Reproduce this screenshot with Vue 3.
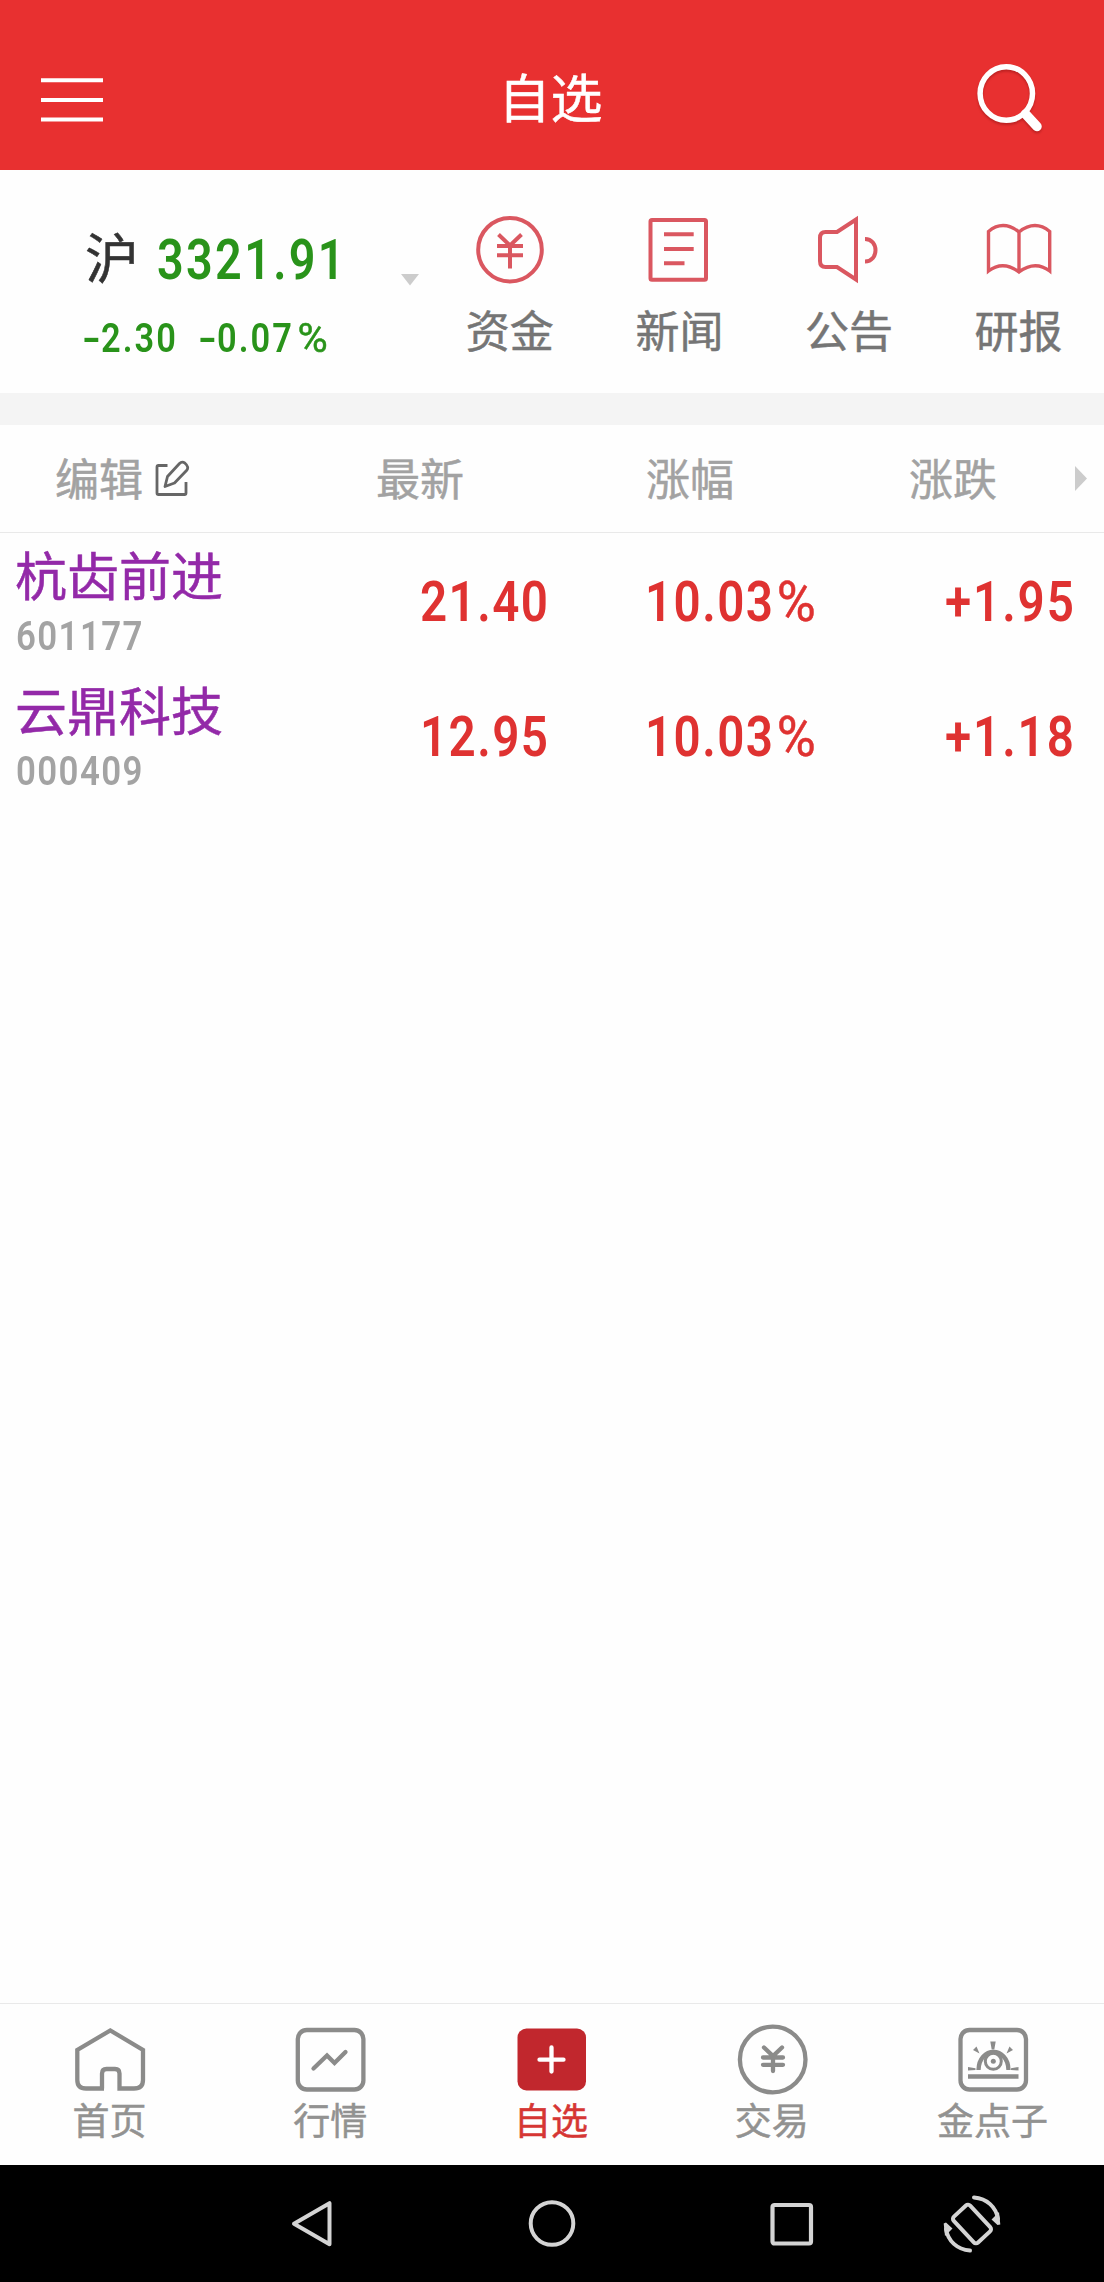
<script setup>
const shortcuts = [
  { id: 'fund', label: '资金' },
  { id: 'news', label: '新闻' },
  { id: 'notice', label: '公告' },
  { id: 'report', label: '研报' },
]
const stocks = [
  { name: '杭齿前进', code: '601177', price: '21.40', percent: '10.03', change: '+1.95' },
  { name: '云鼎科技', code: '000409', price: '12.95', percent: '10.03', change: '+1.18' },
]
const tabs = [
  { id: 'home', label: '首页' },
  { id: 'market', label: '行情' },
  { id: 'watch', label: '自选', active: true },
  { id: 'trade', label: '交易' },
  { id: 'ideas', label: '金点子' },
]
</script>

<template>
  <div class="screen">
    <header class="header">
      <svg class="menu" width="62" height="44" viewBox="0 0 62 44">
        <path d="M0 2.3H62M0 22H62M0 41.5H62" stroke="#fff" stroke-width="4" />
      </svg>
      <h1>自选</h1>
      <svg class="search" width="72" height="72" viewBox="0 0 72 72" fill="none" stroke="#fff">
        <ellipse cx="32.3" cy="31.5" rx="26.2" ry="26.8" stroke-width="5.5" />
        <path d="M51.500 52L63 64.500" stroke-width="9.500" stroke-linecap="round" />
      </svg>
    </header>

    <section class="summary">
      <div class="index">
        <div class="index-main"><span class="cjk">沪</span><span class="num">3321.91</span></div>
        <div class="index-sub">
          <span class="num delta"><i class="minus">-</i>2.30</span>
          <span class="num"><i class="minus">-</i>0.07<i class="pct">%</i></span>
        </div>
      </div>
      <svg class="caret" width="18" height="12" viewBox="0 0 18 12"><path d="M0 0H18L9 11.500Z" fill="#ccc" /></svg>
      <nav class="shortcuts">
        <div v-for="s in shortcuts" :key="s.id" class="shortcut">
          <svg width="72" height="72" viewBox="0 0 72 72" fill="none" stroke="#da5760" stroke-width="4">
            <template v-if="s.id === 'fund'">
              <circle cx="36" cy="35.700" r="31.800" />
              <path d="M24.500 20.500L36 31.500L47.500 20.500M23 32H49M23 41.300H49M36 31V54.500" />
            </template>
            <template v-else-if="s.id === 'news'">
              <rect x="7.500" y="6" width="55.500" height="59.800" rx="1.500" />
              <path d="M21 20.300H50.700M21 35H50.700M21 49.300H41.500" />
            </template>
            <template v-else-if="s.id === 'notice'">
              <path d="M12.500 18H24L43 5.500V65.500L24 53H12.500Q7 53 7 47V24Q7 18 12.500 18Z" />
              <path d="M52 25C66 25 66 47.500 52 47.500" />
            </template>
            <template v-else>
              <path d="M36 18Q20 5.500 5.500 17.500V57Q20 46 36 58Q52 46 66.700 57V17.500Q52 5.500 36 18V58" stroke-width="3.400" />
            </template>
          </svg>
          <span>{{ s.label }}</span>
        </div>
      </nav>
    </section>

    <div class="gap"></div>

    <section class="table">
      <div class="thead">
        <span class="edit">编辑
          <svg width="36" height="38" viewBox="0 0 36 38" fill="none" stroke="#666" stroke-width="2.800" stroke-linejoin="round">
            <path d="M12.500 5.500H3.500Q2 5.500 2 7V33Q2 34.500 3.500 34.500H29.500Q31 34.500 31 33V22" />
            <path d="M10 26.500L12.500 16.500L24.500 3.500Q27 1 30 3.200Q34.500 7 31.500 10.500L19.500 23Z" />
          </svg>
        </span>
        <span class="c1">最新</span>
        <span class="c2">涨幅</span>
        <span class="c3">涨跌</span>
        <svg class="more" width="12" height="25" viewBox="0 0 12 25"><path d="M0 0L12 12.500L0 25Z" fill="#ccc" /></svg>
      </div>
      <div v-for="r in stocks" :key="r.code" class="row">
        <div class="stock">
          <div class="name">{{ r.name }}</div>
          <div class="code"><span class="num">{{ r.code }}</span></div>
        </div>
        <div class="v1"><span class="num">{{ r.price }}</span></div>
        <div class="v2"><span class="num">{{ r.percent }}<i class="pct">%</i></span></div>
        <div class="v3"><span class="num">{{ r.change }}</span></div>
      </div>
    </section>

    <nav class="tabs">
      <div v-for="t in tabs" :key="t.id" class="tab" :class="{ active: t.active }">
        <svg width="72" height="72" viewBox="0 0 72 72" fill="none" stroke="#8b8b8a" stroke-width="4.300">
          <path v-if="t.id === 'home'" d="M28 64.500V49.500Q28 45 32.500 45H41Q45.500 45 45.500 49.500V64.500H60Q69 64.500 69 56V26L36.300 6.500L3.300 26V56Q3.300 64.500 12 64.500H30" />
          <template v-else-if="t.id === 'market'">
            <rect x="2.800" y="6" width="65.600" height="59.500" rx="9" />
            <path d="M18.500 44.500L32 31.500L39.500 39L50.500 28" stroke-linecap="round" />
          </template>
          <template v-else-if="t.id === 'watch'">
            <rect x="1.500" y="4.500" width="68.500" height="62" rx="9" fill="#c1272d" stroke="none" />
            <path d="M35.500 23.500V47.500M23.500 35.700H47.500" stroke="#fff" stroke-linecap="round" />
          </template>
          <template v-else-if="t.id === 'trade'">
            <circle cx="35.700" cy="35.500" r="32.800" />
            <path d="M27 23.500L36 32L45 23.500M26 33.500H46M26 40.800H46M36 32V47" stroke-linecap="round" />
          </template>
          <template v-else>
            <rect x="2.500" y="6" width="65.500" height="59.500" rx="9" />
            <path d="M10 52.500H60.500" />
            <path d="M20.500 46C21 22 50 22 50.500 46" />
            <circle cx="35.300" cy="37.300" r="8" stroke-width="3" />
            <g fill="#8b8b8a" stroke="none">
              <circle cx="35.300" cy="37.300" r="2.500" />
              <path d="M32.300 17.500H37.700L36.300 25.500H33.700ZM15 26L18.500 22.500L21.500 29.500ZM55 26L51.500 22.500L48.500 29.500ZM10 43L17.500 44.300V46L10 46.500ZM60.500 43L53 44.300V46L60.500 46.500Z" />
            </g>
          </template>
        </svg>
        <span>{{ t.label }}</span>
      </div>
    </nav>

    <footer class="sysbar">
      <svg class="back" width="44" height="50" viewBox="0 0 44 50" fill="none" stroke="#d4d4d4" stroke-width="4" stroke-linejoin="round">
        <path d="M39.500 4.200V45.200L4 24.800Z" />
      </svg>
      <svg class="home" width="48" height="48" viewBox="0 0 48 48" fill="none" stroke="#d4d4d4" stroke-width="4">
        <circle cx="24" cy="23.500" r="21.300" />
      </svg>
      <svg class="recent" width="44" height="44" viewBox="0 0 44 44" fill="none" stroke="#d4d4d4" stroke-width="4.200">
        <rect x="2.500" y="3" width="38.500" height="38.500" rx="2" />
      </svg>
      <svg class="rotate" width="60" height="60" viewBox="0 0 60 60" fill="none" stroke="#d4d4d4" stroke-width="4">
        <rect x="18.800" y="12.300" width="22.400" height="35.400" rx="3" transform="rotate(-43 30 30)" />
        <path d="M32 3.500C45 4.500 54 13 56 25M28 56.500C15 55.500 6 47 4 35" stroke-linecap="round" />
        <path d="M49.500 25.500L57 18L58.300 30.500L55.500 31ZM10.500 34.500L3 42L1.700 29.500L4 28.500Z" fill="#d4d4d4" stroke="none" />
      </svg>
    </footer>
  </div>
</template>

<style>
body {
  margin: 0;
}
</style>

<style scoped>
.screen {
  width: 1104px;
  height: 2282px;
  display: flex;
  flex-direction: column;
  background: #fefefe;
  font-family: "Noto Sans CJK SC", sans-serif;
  -webkit-text-stroke: 0.500px currentColor;
}
svg {
  display: block;
  flex: none;
}
i {
  font-style: normal;
}
.num {
  display: inline-block;
  font-family: Roboto, sans-serif;
  font-weight: 600;
  letter-spacing: 0.03em;
  transform: scaleX(0.85);
  transform-origin: 0 50%;
  white-space: nowrap;
  -webkit-text-stroke: 0;
}
.pct {
  display: inline-block;
  font-weight: 400;
  margin-left: 3px;
  transform: scaleX(1.12);
  transform-origin: 0 50%;
  -webkit-text-stroke: 0.500px currentColor;
}
.minus {
  display: inline-block;
  transform: scaleX(1.5);
  transform-origin: 0 50%;
  margin-right: 5px;
}
.header {
  height: 170px;
  box-sizing: border-box;
  display: flex;
  justify-content: space-between;
  padding: 0 58px 0 41px;
  background: #e83030;
  color: #fff;
}
.menu {
  margin-top: 78px;
}
.header h1 {
  margin: 66px 0 0 24px;
  font-size: 52px;
  line-height: 60px;
  font-weight: 400;
}
.search {
  margin-top: 62px;
  filter: drop-shadow(0 2px 1px rgba(90, 0, 0, 0.3));
}
.summary {
  height: 223px;
  display: flex;
}
.index {
  width: 319px;
  padding: 54px 0 0 82px;
}
.index-main {
  display: flex;
  height: 72px;
  line-height: 72px;
}
.index-main .cjk {
  width: 72px;
  margin: -4px 0 0 3px;
  font-size: 54px;
  color: #333;
}
.index-main .num {
  font-size: 55px;
  letter-spacing: 0.05em;
  color: #29931a;
}
.index-sub {
  display: flex;
  height: 50px;
  margin-top: 17px;
  line-height: 50px;
  font-size: 40.500px;
  color: #29931a;
}
.index-sub .num {
  letter-spacing: 0.06em;
}
.index-sub .pct {
  margin-left: 4px;
  transform: scaleX(1.2);
}
.delta {
  width: 116px;
}
.caret {
  margin-top: 104px;
}
.shortcuts {
  display: flex;
  margin-left: 6px;
}
.shortcut {
  width: 169.600px;
  padding-top: 44px;
  display: flex;
  flex-direction: column;
  align-items: center;
  font-size: 44px;
  line-height: 50px;
  color: #757575;
}
.shortcut span {
  margin-top: 18px;
}
.gap {
  height: 32px;
  background: #f4f4f4;
}
.table {
  flex: 1;
}
.thead {
  height: 107px;
  display: flex;
  align-items: center;
  border-bottom: 1px solid #e9e9e9;
  font-size: 44px;
  line-height: 103px;
  color: #a2a2a2;
}
.thead > span {
  margin-top: -2px;
}
.edit {
  display: flex;
  align-items: center;
  gap: 12px;
  width: 321px;
  padding-left: 55px;
}
.edit svg {
  margin-top: 3px;
}
.c1 {
  width: 270px;
}
.c2 {
  width: 263px;
}
.c3 {
  width: 166px;
}
.row {
  height: 135px;
  display: flex;
  padding-left: 15px;
}
.stock {
  width: 405px;
}
.name {
  height: 82px;
  line-height: 82px;
  font-size: 52px;
  color: #9329a8;
}
.code {
  height: 40px;
  margin-top: -3px;
  padding-left: 0.500px;
  line-height: 40px;
  font-size: 41px;
  color: #a3a3a3;
}
.code .num {
  letter-spacing: 0.04em;
}
.v1,
.v2,
.v3 {
  padding-top: 28px;
  line-height: 72px;
  font-size: 56px;
  color: #df3231;
}
.v1 {
  width: 225px;
}
.v2 {
  width: 300px;
}
.v3 .num {
  letter-spacing: 0.04em;
}
.tabs {
  height: 161px;
  display: flex;
  border-top: 1px solid #e9e9e9;
}
.tab {
  flex: 1;
  padding-top: 20px;
  display: flex;
  flex-direction: column;
  align-items: center;
  font-size: 37px;
  line-height: 40px;
  color: #929291;
}
.tab span {
  margin: 3px 2px 0 0;
}
.tab.active {
  color: #d63634;
}
.sysbar {
  height: 117px;
  display: flex;
  align-items: center;
  background: #000;
}
.back {
  margin-left: 290px;
}
.home {
  margin-left: 194px;
}
.recent {
  margin-left: 194px;
}
.rotate {
  margin-left: 128px;
}
</style>
